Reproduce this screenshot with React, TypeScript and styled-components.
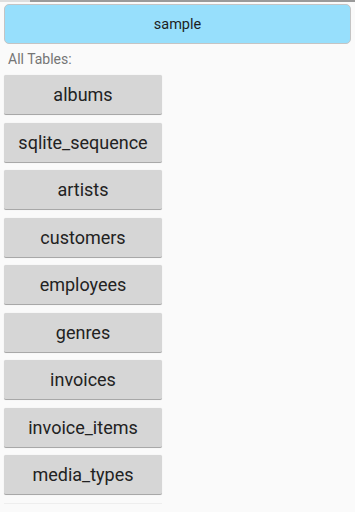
import React from 'react';
import styled, { createGlobalStyle } from 'styled-components';

const tables = [
  'albums',
  'sqlite_sequence',
  'artists',
  'customers',
  'employees',
  'genres',
  'invoices',
  'invoice_items',
  'media_types',
];

const GlobalStyle = createGlobalStyle`
  html, body {
    margin: 0;
    padding: 0;
    background: #fafafa;
    font-family: Roboto, "Noto Sans", sans-serif;
    overflow: hidden;
  }
`

export default function App() {
  return (
    <>
      <GlobalStyle />
      <TopEdge />
      <Screen>
        <DatabaseButton>sample</DatabaseButton>
        <SectionLabel>All Tables:</SectionLabel>
        <TableList>
          {tables.map((name) => (
            <TableButton key={name}>{name}</TableButton>
          ))}
          <FadedEdge />
        </TableList>
      </Screen>
    </>
  );
}

const TopEdge = styled.div`
  height: 2px;
  background: linear-gradient(to right, #dedede 0, #dedede 30px, #9a9a9a 30px, #9a9a9a 100%);
`
const Screen = styled.div`
  display: flex;
  flex-direction: column;
  padding: 2px 4px 0 4px;
`
const DatabaseButton = styled.button`
  height: 40px;
  width: 100%;
  box-sizing: border-box;
  background: #97dffc;
  border: 1px solid #c4c4c4;
  border-radius: 5px;
  font-family: Roboto, sans-serif;
  font-size: 14.5px;
  color: #1e1e1e;
  padding: 0;
`
const SectionLabel = styled.div`
  margin-top: 6px;
  padding-left: 4px;
  font-size: 14px;
  line-height: 18px;
  color: #757575;
`
const TableList = styled.div`
  display: flex;
  flex-direction: column;
  gap: 7.5px;
  margin-top: 7px;
`
const TableButton = styled.button`
  width: 158px;
  height: 40px;
  box-sizing: border-box;
  background: #d6d6d6;
  border: none;
  border-bottom: 1px solid #a8a8a8;
  border-radius: 2px;
  box-shadow: 0 0 1px rgba(0, 0, 0, 0.15);
  font-family: Roboto, sans-serif;
  font-size: 18px;
  color: #222222;
  padding: 0;
`
const FadedEdge = styled.div`
  width: 158px;
  height: 1px;
  background: #eeeeee;
`
